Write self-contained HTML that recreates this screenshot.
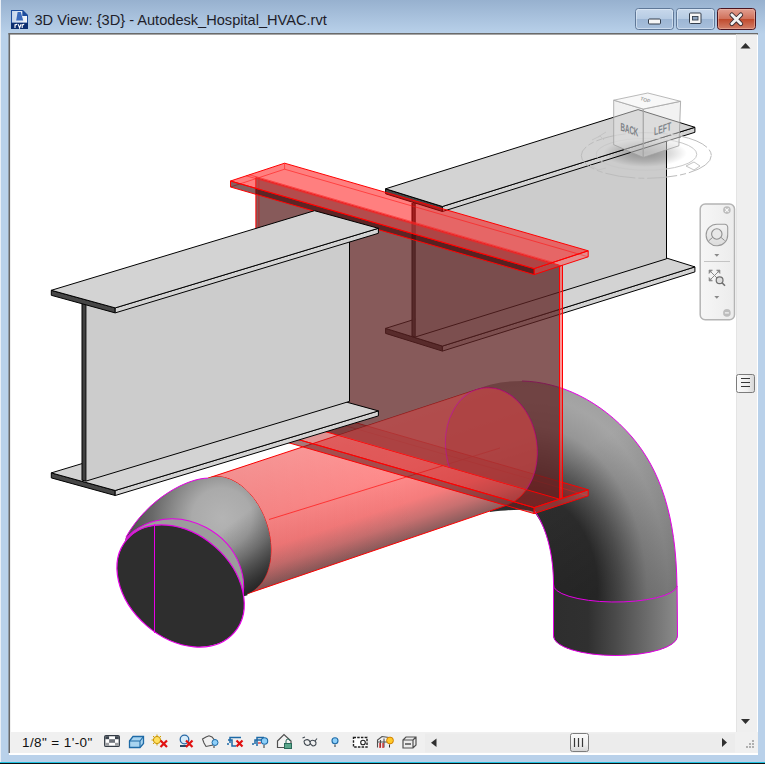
<!DOCTYPE html>
<html><head><meta charset="utf-8"><style>html,body{margin:0;padding:0;background:#fff;}svg{display:block}</style></head>
<body><svg width="765" height="764" viewBox="0 0 765 764">

<defs>
<linearGradient id="gTitle" x1="0" y1="0" x2="0" y2="1">
<stop offset="0" stop-color="#97b1cf"/><stop offset="1" stop-color="#b9d1ea"/></linearGradient>
<linearGradient id="gBtn" x1="0" y1="0" x2="0" y2="1">
<stop offset="0" stop-color="#c9d9ec"/><stop offset="0.5" stop-color="#b6cbe3"/><stop offset="0.51" stop-color="#9db6d4"/><stop offset="1" stop-color="#a8c0dc"/></linearGradient>
<linearGradient id="gClose" x1="0" y1="0" x2="0" y2="1">
<stop offset="0" stop-color="#e3a193"/><stop offset="0.5" stop-color="#d0705a"/><stop offset="0.51" stop-color="#c04a2d"/><stop offset="1" stop-color="#d3826c"/></linearGradient>
<linearGradient id="gPipe" gradientUnits="userSpaceOnUse" x1="208.25" y1="478.1" x2="246.75" y2="593.9"><stop offset="0" stop-color="#ff9c9c"/><stop offset="0.45" stop-color="#ff8c8c"/><stop offset="0.7" stop-color="#f57c7c"/><stop offset="0.85" stop-color="#c87070"/><stop offset="1" stop-color="#845a5a"/></linearGradient><linearGradient id="gPipe2" gradientUnits="userSpaceOnUse" x1="260" y1="580" x2="420" y2="520"><stop offset="0" stop-color="#600000" stop-opacity="0.08"/><stop offset="1" stop-color="#600000" stop-opacity="0"/></linearGradient>
<radialGradient id="gElbowL" gradientUnits="userSpaceOnUse" cx="222" cy="518" r="100"><stop offset="0" stop-color="#b4b4b4"/><stop offset="0.3" stop-color="#aaaaaa"/><stop offset="0.7" stop-color="#686868"/><stop offset="1" stop-color="#484848"/></radialGradient>
<linearGradient id="gElbowL2" gradientUnits="userSpaceOnUse" x1="215" y1="535" x2="255" y2="590"><stop offset="0" stop-color="#000" stop-opacity="0"/><stop offset="0.5" stop-color="#000" stop-opacity="0.25"/><stop offset="1" stop-color="#000" stop-opacity="0.6"/></linearGradient>
<radialGradient id="gElbowR" gradientUnits="userSpaceOnUse" cx="0" cy="0" r="1" gradientTransform="translate(530 590) scale(150 210)"><stop offset="0" stop-color="#2d2d2d"/><stop offset="0.45" stop-color="#2f2f2f"/><stop offset="0.6" stop-color="#5a5a5a"/><stop offset="0.78" stop-color="#969696"/><stop offset="0.92" stop-color="#a5a5a5"/><stop offset="1" stop-color="#a0a0a0"/></radialGradient>
<linearGradient id="gElbowR2" gradientUnits="userSpaceOnUse" x1="600" y1="440" x2="690" y2="580"><stop offset="0" stop-color="#000" stop-opacity="0"/><stop offset="1" stop-color="#000" stop-opacity="0.28"/></linearGradient>
<linearGradient id="gVert" gradientUnits="userSpaceOnUse" x1="553" y1="0" x2="678" y2="0"><stop offset="0" stop-color="#2e2e2e"/><stop offset="0.28" stop-color="#303030"/><stop offset="0.5" stop-color="#4a4a4a"/><stop offset="1" stop-color="#8c8c8c"/></linearGradient>
</defs>
<rect x="0" y="0" width="765" height="764" fill="#b9d1ea"/>
<rect x="0" y="0" width="765" height="34" fill="url(#gTitle)"/>
<rect x="0" y="0" width="1" height="764" fill="#e8eef6"/>
<!-- title icon -->
<path d="M11,10 H23 L28,15 V29 H11 Z" fill="#1c4c9c"/>
<defs><linearGradient id="gIco" x1="0" y1="0" x2="1" y2="0"><stop offset="0" stop-color="#c4d4ea"/><stop offset="1" stop-color="#f4f8fc"/></linearGradient></defs>
<path d="M12,11 H22.3 V16 H27 V22.8 H12 Z" fill="url(#gIco)"/>
<path d="M16.2,20.5 L17.6,12 L20.8,12 L23.2,20.5 Z" fill="#3a6abc"/>
<rect x="11" y="22.8" width="17" height="6.2" fill="#0c2e70"/>
<path d="M15,24.3 V28 M15,25.5 Q15.8,24.3 17.2,24.4 M18.2,24.3 L19.6,28 L21,24.3 M22.2,24.3 V28 M22.2,25.5 Q23,24.3 24.2,24.4" fill="none" stroke="#ffffff" stroke-width="1.1"/>
<text x="34.5" y="25" font-family="Liberation Sans" font-size="14.6" fill="#1e1e2a">3D View: {3D} - Autodesk_Hospital_HVAC.rvt</text>
<!-- buttons -->
<rect x="635.5" y="8.5" width="38" height="21" rx="3" fill="url(#gBtn)" stroke="#5f7898" stroke-width="1"/>
<rect x="636.5" y="9.5" width="36" height="19" rx="2" fill="none" stroke="#e4eef8" stroke-opacity="0.6" stroke-width="1"/>
<rect x="676.5" y="8.5" width="38" height="21" rx="3" fill="url(#gBtn)" stroke="#5f7898" stroke-width="1"/>
<rect x="677.5" y="9.5" width="36" height="19" rx="2" fill="none" stroke="#e4eef8" stroke-opacity="0.6" stroke-width="1"/>
<rect x="717.5" y="8.5" width="38" height="21" rx="3" fill="url(#gClose)" stroke="#4a1420" stroke-width="1"/>
<rect x="718.5" y="9.5" width="36" height="19" rx="2" fill="none" stroke="#f0c0b0" stroke-opacity="0.5" stroke-width="1"/>
<rect x="648.5" y="19" width="12" height="5" rx="1" fill="#f6f6f6" stroke="#343e4c" stroke-width="1"/>
<rect x="689.5" y="13" width="11.5" height="10.5" rx="1" fill="#f6f6f6" stroke="#343e4c" stroke-width="1"/>
<rect x="692.5" y="16.5" width="5.5" height="3.5" fill="#8ea4c0" stroke="#343e4c" stroke-width="0.9"/>
<path d="M731.8,14.8 L740.8,23.8 M740.8,14.8 L731.8,23.8" stroke="#3a2a30" stroke-width="4.6" stroke-linecap="round"/>
<path d="M731.8,14.8 L740.8,23.8 M740.8,14.8 L731.8,23.8" stroke="#f2f2f2" stroke-width="2.8" stroke-linecap="round"/>
<!-- client -->
<rect x="9" y="33" width="749" height="722" fill="#ffffff"/>
<rect x="8.5" y="33" width="1.6" height="720" fill="#6a6a6a"/>
<rect x="8.5" y="33" width="749.5" height="1.6" fill="#6a6a6a"/>

<svg x="10" y="34.5" width="726" height="697.5" viewBox="10 34.5 726 697.5" overflow="hidden">
<polygon points="385.6,328.4 442.4,346.1 442.4,351.1 385.6,333.4" fill="#464646" stroke="#000" stroke-width="1"/>
<polygon points="442.4,346.1 694.9,266.9 694.9,271.9 442.4,351.1" fill="#d3d3d3" stroke="#000" stroke-width="1"/>
<polygon points="385.6,328.4 442.4,346.1 694.9,266.9 638.1,249.2" fill="#d3d3d3" stroke="#000" stroke-width="1"/>
<polygon points="412.0,203.0 415.3,203.0 415.3,337.0 412.0,336.0" fill="#404040"/>
<line x1="412.0" y1="203.0" x2="412.0" y2="336.0" stroke="#000" stroke-width="1"/>
<polygon points="415.3,203.0 666.5,125.0 666.5,258.8 415.3,337.0" fill="#cccccc"/>
<polyline points="666.5,125.0 666.5,258.8 415.3,337.0 412.0,336.0" fill="none" stroke="#000" stroke-width="1"/>
<line x1="415.3" y1="203.0" x2="415.3" y2="337.0" stroke="#000" stroke-width="0.8"/>
<polygon points="385.6,188.8 442.4,206.5 442.4,211.5 385.6,193.8" fill="#464646" stroke="#000" stroke-width="1"/>
<polygon points="442.4,206.5 694.9,127.3 694.9,132.3 442.4,211.5" fill="#d3d3d3" stroke="#000" stroke-width="1"/>
<polygon points="385.6,188.8 442.4,206.5 694.9,127.3 638.1,109.6" fill="#d3d3d3" stroke="#000" stroke-width="1"/>
<path d="M470,392 C490,383 505,381 522,381 C560,382 600,400 632,437 C660,470 676,515 677,586 L677.5,636 A62,19.5 0 0 1 553.5,636 L553.5,582 C553,550 545,525 534,512 C525,508 510,510 490,512 Z" fill="url(#gElbowR)"/><path d="M470,392 C490,383 505,381 522,381 C560,382 600,400 632,437 C660,470 676,515 677,586 L677.5,636 A62,19.5 0 0 1 553.5,636 L553.5,582 C553,550 545,525 534,512 C525,508 510,510 490,512 Z" fill="url(#gElbowR2)"/>
<path d="M553.5,584 A62,17 0 0 0 677.3,586 L677.5,636 A62,19.5 0 0 1 553.5,636 Z" fill="url(#gVert)"/>
<path d="M522,381 C560,382 600,400 632,437 C660,470 676,515 677,586 L677.5,636 A62,19.5 0 0 1 553.5,636 L553.5,582 C553,550 545,525 534,510" fill="none" stroke="#e600e6" stroke-width="1"/><path d="M553.5,584 A62,17 0 0 0 677.3,586" fill="none" stroke="#e600e6" stroke-width="1"/>
<polygon points="208.2,478.1 210.8,477.4 213.5,476.9 216.2,476.7 219.0,476.7 221.8,477.0 224.6,477.6 227.4,478.4 230.3,479.4 233.1,480.7 235.9,482.2 238.7,483.9 241.4,485.9 244.1,488.1 246.6,490.5 249.2,493.1 251.6,495.9 253.9,498.8 256.1,501.9 258.2,505.1 260.1,508.5 261.9,512.0 263.6,515.6 265.1,519.3 266.4,523.1 267.6,526.9 268.6,530.7 269.4,534.6 270.1,538.5 270.5,542.4 270.8,546.2 270.9,550.0 270.8,553.7 270.5,557.4 270.1,561.0 269.4,564.4 268.6,567.8 267.6,571.0 266.5,574.0 265.1,576.9 263.6,579.7 262.0,582.2 260.2,584.5 258.2,586.6 256.2,588.6 254.0,590.2 251.7,591.7 249.3,592.9 246.8,593.9 506.0,505.5 508.2,504.6 510.4,503.6 512.6,502.5 514.7,501.2 516.7,499.7 518.7,498.1 520.6,496.4 522.4,494.5 524.1,492.5 525.8,490.4 527.3,488.2 528.8,485.8 530.1,483.4 531.4,480.8 532.5,478.2 533.5,475.5 534.4,472.7 535.2,469.8 535.9,466.9 536.4,463.9 536.8,460.8 537.1,457.8 537.3,454.7 537.3,451.6 537.2,448.4 537.0,445.3 536.7,442.2 536.2,439.1 535.7,436.0 535.0,432.9 534.1,429.9 533.2,427.0 532.1,424.1 531.0,421.2 529.7,418.4 528.3,415.7 526.8,413.1 525.3,410.6 523.6,408.2 521.8,405.9 520.0,403.7 518.1,401.7 516.1,399.7 514.0,397.9 511.9,396.2 509.7,394.7 507.5,393.3 505.2,392.1 502.9,391.0 500.6,390.0 498.2,389.3 495.8,388.6 493.4,388.2 491.0,387.9 488.6,387.8 486.2,387.8 483.8,388.0 481.5,388.3 479.1,388.9 476.8,389.5" fill="url(#gPipe)" stroke="#ff0000" stroke-width="1"/><polygon points="208.2,478.1 210.8,477.4 213.5,476.9 216.2,476.7 219.0,476.7 221.8,477.0 224.6,477.6 227.4,478.4 230.3,479.4 233.1,480.7 235.9,482.2 238.7,483.9 241.4,485.9 244.1,488.1 246.6,490.5 249.2,493.1 251.6,495.9 253.9,498.8 256.1,501.9 258.2,505.1 260.1,508.5 261.9,512.0 263.6,515.6 265.1,519.3 266.4,523.1 267.6,526.9 268.6,530.7 269.4,534.6 270.1,538.5 270.5,542.4 270.8,546.2 270.9,550.0 270.8,553.7 270.5,557.4 270.1,561.0 269.4,564.4 268.6,567.8 267.6,571.0 266.5,574.0 265.1,576.9 263.6,579.7 262.0,582.2 260.2,584.5 258.2,586.6 256.2,588.6 254.0,590.2 251.7,591.7 249.3,592.9 246.8,593.9 506.0,505.5 508.2,504.6 510.4,503.6 512.6,502.5 514.7,501.2 516.7,499.7 518.7,498.1 520.6,496.4 522.4,494.5 524.1,492.5 525.8,490.4 527.3,488.2 528.8,485.8 530.1,483.4 531.4,480.8 532.5,478.2 533.5,475.5 534.4,472.7 535.2,469.8 535.9,466.9 536.4,463.9 536.8,460.8 537.1,457.8 537.3,454.7 537.3,451.6 537.2,448.4 537.0,445.3 536.7,442.2 536.2,439.1 535.7,436.0 535.0,432.9 534.1,429.9 533.2,427.0 532.1,424.1 531.0,421.2 529.7,418.4 528.3,415.7 526.8,413.1 525.3,410.6 523.6,408.2 521.8,405.9 520.0,403.7 518.1,401.7 516.1,399.7 514.0,397.9 511.9,396.2 509.7,394.7 507.5,393.3 505.2,392.1 502.9,391.0 500.6,390.0 498.2,389.3 495.8,388.6 493.4,388.2 491.0,387.9 488.6,387.8 486.2,387.8 483.8,388.0 481.5,388.3 479.1,388.9 476.8,389.5" fill="url(#gPipe2)"/>
<line x1="269" y1="519.5" x2="500" y2="448" stroke="#ff2020" stroke-width="0.8"/>

<polyline points="230.5,426.0 284.6,408.2 588.2,495.8" fill="none" stroke="#ff2020" stroke-width="0.8" stroke-opacity="0.7"/>
<line x1="284.6" y1="402.2" x2="284.6" y2="408.2" stroke="#ff2020" stroke-width="0.8" stroke-opacity="0.7"/>
<polygon points="534.1,507.6 588.2,489.8 588.2,495.8 534.1,513.6" fill="#ff4040" fill-opacity="0.45" stroke="#ff0000" stroke-width="1"/>
<polygon points="230.5,420.0 534.1,507.6 534.1,513.6 230.5,426.0" fill="#6a2020" fill-opacity="0.6" stroke="#ff0000" stroke-width="1"/>
<polygon points="230.5,420.0 284.6,402.2 588.2,489.8 534.1,507.6" fill="#c01c1c" fill-opacity="0.48" stroke="#ff0000" stroke-width="1"/>
<polygon points="255.9,177.6 559.5,265.2 559.5,499.2 255.9,411.6" fill="#5f2323" fill-opacity="0.75" stroke="#ff0000" stroke-width="1"/>
<polygon points="559.5,266.2 562.5,265.2 562.5,498.2 559.5,499.2" fill="#ff3030" fill-opacity="0.5" stroke="#ff0000" stroke-width="1"/>
<line x1="258.9" y1="178.6" x2="258.9" y2="411.6" stroke="#c02020" stroke-width="1" stroke-opacity="0.8"/>
<clipPath id="cWeb"><polygon points="255.9,177.6 559.5,265.2 559.5,499.2 255.9,411.6"/></clipPath><g clip-path="url(#cWeb)"><polygon points="208.2,478.1 210.8,477.4 213.5,476.9 216.2,476.7 219.0,476.7 221.8,477.0 224.6,477.6 227.4,478.4 230.3,479.4 233.1,480.7 235.9,482.2 238.7,483.9 241.4,485.9 244.1,488.1 246.6,490.5 249.2,493.1 251.6,495.9 253.9,498.8 256.1,501.9 258.2,505.1 260.1,508.5 261.9,512.0 263.6,515.6 265.1,519.3 266.4,523.1 267.6,526.9 268.6,530.7 269.4,534.6 270.1,538.5 270.5,542.4 270.8,546.2 270.9,550.0 270.8,553.7 270.5,557.4 270.1,561.0 269.4,564.4 268.6,567.8 267.6,571.0 266.5,574.0 265.1,576.9 263.6,579.7 262.0,582.2 260.2,584.5 258.2,586.6 256.2,588.6 254.0,590.2 251.7,591.7 249.3,592.9 246.8,593.9 506.0,505.5 508.2,504.6 510.4,503.6 512.6,502.5 514.7,501.2 516.7,499.7 518.7,498.1 520.6,496.4 522.4,494.5 524.1,492.5 525.8,490.4 527.3,488.2 528.8,485.8 530.1,483.4 531.4,480.8 532.5,478.2 533.5,475.5 534.4,472.7 535.2,469.8 535.9,466.9 536.4,463.9 536.8,460.8 537.1,457.8 537.3,454.7 537.3,451.6 537.2,448.4 537.0,445.3 536.7,442.2 536.2,439.1 535.7,436.0 535.0,432.9 534.1,429.9 533.2,427.0 532.1,424.1 531.0,421.2 529.7,418.4 528.3,415.7 526.8,413.1 525.3,410.6 523.6,408.2 521.8,405.9 520.0,403.7 518.1,401.7 516.1,399.7 514.0,397.9 511.9,396.2 509.7,394.7 507.5,393.3 505.2,392.1 502.9,391.0 500.6,390.0 498.2,389.3 495.8,388.6 493.4,388.2 491.0,387.9 488.6,387.8 486.2,387.8 483.8,388.0 481.5,388.3 479.1,388.9 476.8,389.5" fill="#ff6464" fill-opacity="0.35"/><ellipse cx="491.4" cy="447.5" rx="45.6" ry="60" transform="rotate(-8 491.4 447.5)" fill="#a01010" fill-opacity="0.12" stroke="#c000c0" stroke-width="1" stroke-opacity="0.5"/></g>
<polyline points="230.5,187.0 284.6,169.2 588.2,256.8" fill="none" stroke="#ff2020" stroke-width="0.8" stroke-opacity="0.7"/>
<line x1="284.6" y1="163.2" x2="284.6" y2="169.2" stroke="#ff2020" stroke-width="0.8" stroke-opacity="0.7"/>
<polygon points="534.1,268.6 588.2,250.8 588.2,256.8 534.1,274.6" fill="#ff4040" fill-opacity="0.45" stroke="#ff0000" stroke-width="1"/>
<polygon points="230.5,181.0 534.1,268.6 534.1,274.6 230.5,187.0" fill="#470909" fill-opacity="0.65" stroke="#ff0000" stroke-width="1"/>
<polygon points="249.4,174.8 284.6,163.2 588.2,250.8 553.0,262.4" fill="#ff0000" fill-opacity="0.5"/>
<polygon points="230.5,181.0 249.4,174.8 255.9,176.6 255.9,188.3" fill="#ff0000" fill-opacity="0.5"/>
<polygon points="255.9,188.3 255.9,176.6 553.0,262.4 534.1,268.6" fill="#e13e3e" fill-opacity="0.5"/>
<line x1="246.2" y1="175.8" x2="549.8" y2="263.4" stroke="#ff2020" stroke-width="0.8" stroke-opacity="0.8"/>
<line x1="249.4" y1="174.8" x2="553.0" y2="262.4" stroke="#ff2020" stroke-width="0.8" stroke-opacity="0.8"/>
<polygon points="230.5,181.0 284.6,163.2 588.2,250.8 534.1,268.6" fill="none" stroke="#ff0000" stroke-width="1"/>
<polygon points="51.3,472.9 115.2,490.5 115.2,495.5 51.3,477.9" fill="#464646" stroke="#000" stroke-width="1"/>
<polygon points="115.2,490.5 378.4,410.9 378.4,415.9 115.2,495.5" fill="#d3d3d3" stroke="#000" stroke-width="1"/>
<polygon points="51.3,472.9 115.2,490.5 378.4,410.9 314.5,393.3" fill="#d3d3d3" stroke="#000" stroke-width="1"/>
<polygon points="82.0,300.0 86.0,300.0 86.0,481.1 82.0,480.1" fill="#404040"/>
<line x1="82.0" y1="300.0" x2="82.0" y2="480.1" stroke="#000" stroke-width="1"/>
<polygon points="86.0,300.0 349.5,230.0 349.5,401.4 86.0,481.1" fill="#cccccc"/>
<polyline points="349.5,230.0 349.5,401.4 86.0,481.1 82.0,480.1" fill="none" stroke="#000" stroke-width="1"/>
<line x1="86.0" y1="300.0" x2="86.0" y2="481.1" stroke="#000" stroke-width="0.8"/>
<polygon points="51.3,290.3 115.2,307.9 115.2,312.9 51.3,295.3" fill="#464646" stroke="#000" stroke-width="1"/>
<polygon points="115.2,307.9 378.4,228.3 378.4,233.3 115.2,312.9" fill="#d3d3d3" stroke="#000" stroke-width="1"/>
<polygon points="51.3,290.3 115.2,307.9 378.4,228.3 314.5,210.7" fill="#d3d3d3" stroke="#000" stroke-width="1"/>
<clipPath id="cElbowL"><path d="M208.2,478.1 C188,478 148,498 126,537 L118,567 L150,625 L247.8,594.9 L246.8,593.9 L249.3,592.9 L251.7,591.7 L254.0,590.2 L256.2,588.6 L258.2,586.6 L260.2,584.5 L262.0,582.2 L263.6,579.7 L265.1,576.9 L266.5,574.0 L267.6,571.0 L268.6,567.8 L269.4,564.4 L270.1,561.0 L270.5,557.4 L270.8,553.7 L270.9,550.0 L270.8,546.2 L270.5,542.4 L270.1,538.5 L269.4,534.6 L268.6,530.7 L267.6,526.9 L266.4,523.1 L265.1,519.3 L263.6,515.6 L261.9,512.0 L260.1,508.5 L258.2,505.1 L256.1,501.9 L253.9,498.8 L251.6,495.9 L249.2,493.1 L246.6,490.5 L244.1,488.1 L241.4,485.9 L238.7,483.9 L235.9,482.2 L233.1,480.7 L230.3,479.4 L227.4,478.4 L224.6,477.6 L221.8,477.0 L219.0,476.7 L216.2,476.7 L213.5,476.9 L210.8,477.4 L208.2,478.1 Z"/></clipPath><path d="M208.2,478.1 C188,478 148,498 126,537 L118,567 L150,625 L247.8,594.9 L246.8,593.9 L249.3,592.9 L251.7,591.7 L254.0,590.2 L256.2,588.6 L258.2,586.6 L260.2,584.5 L262.0,582.2 L263.6,579.7 L265.1,576.9 L266.5,574.0 L267.6,571.0 L268.6,567.8 L269.4,564.4 L270.1,561.0 L270.5,557.4 L270.8,553.7 L270.9,550.0 L270.8,546.2 L270.5,542.4 L270.1,538.5 L269.4,534.6 L268.6,530.7 L267.6,526.9 L266.4,523.1 L265.1,519.3 L263.6,515.6 L261.9,512.0 L260.1,508.5 L258.2,505.1 L256.1,501.9 L253.9,498.8 L251.6,495.9 L249.2,493.1 L246.6,490.5 L244.1,488.1 L241.4,485.9 L238.7,483.9 L235.9,482.2 L233.1,480.7 L230.3,479.4 L227.4,478.4 L224.6,477.6 L221.8,477.0 L219.0,476.7 L216.2,476.7 L213.5,476.9 L210.8,477.4 L208.2,478.1 Z" fill="url(#gElbowL)"/><path d="M208.2,478.1 C188,478 148,498 126,537 L118,567 L150,625 L247.8,594.9 L246.8,593.9 L249.3,592.9 L251.7,591.7 L254.0,590.2 L256.2,588.6 L258.2,586.6 L260.2,584.5 L262.0,582.2 L263.6,579.7 L265.1,576.9 L266.5,574.0 L267.6,571.0 L268.6,567.8 L269.4,564.4 L270.1,561.0 L270.5,557.4 L270.8,553.7 L270.9,550.0 L270.8,546.2 L270.5,542.4 L270.1,538.5 L269.4,534.6 L268.6,530.7 L267.6,526.9 L266.4,523.1 L265.1,519.3 L263.6,515.6 L261.9,512.0 L260.1,508.5 L258.2,505.1 L256.1,501.9 L253.9,498.8 L251.6,495.9 L249.2,493.1 L246.6,490.5 L244.1,488.1 L241.4,485.9 L238.7,483.9 L235.9,482.2 L233.1,480.7 L230.3,479.4 L227.4,478.4 L224.6,477.6 L221.8,477.0 L219.0,476.7 L216.2,476.7 L213.5,476.9 L210.8,477.4 L208.2,478.1 Z" fill="url(#gElbowL2)"/>
<g clip-path="url(#cElbowL)"><ellipse cx="178" cy="580.5" rx="67" ry="60" transform="rotate(28 178 580.5)" fill="#9c9c9c" stroke="#e600e6" stroke-width="1"/></g>
<ellipse cx="180.6" cy="586" rx="71" ry="52.2" transform="rotate(41 180.6 586)" fill="#2e2e2e" stroke="#e600e6" stroke-width="1.2"/>
<line x1="154.5" y1="524" x2="154.5" y2="633" stroke="#e600e6" stroke-width="1"/>
<path d="M208.2,478.1 C188,478 148,498 126,537" fill="none" stroke="#e600e6" stroke-width="1"/>

<defs><radialGradient id="gShadow" cx="0.5" cy="0.5" r="0.5"><stop offset="0" stop-color="#000" stop-opacity="0.3"/><stop offset="0.6" stop-color="#000" stop-opacity="0.14"/><stop offset="1" stop-color="#000" stop-opacity="0"/></radialGradient></defs>
<ellipse cx="646.3" cy="155.5" rx="65" ry="22.8" fill="none" stroke="#bcbcbc" stroke-width="1" stroke-dasharray="30,3,6,3"/>
<ellipse cx="646.5" cy="154.3" rx="50.3" ry="16" fill="none" stroke="#c8c8c8" stroke-width="1"/>
<path d="M592,140 L600,136 L604,140 M590,165 L598,170 L606,168 M686,166 L694,162 L700,166 L694,170 Z M598,137 L606,132" fill="none" stroke="#c4c4c4" stroke-width="1"/>
<ellipse cx="645" cy="153" rx="42" ry="14" fill="url(#gShadow)"/>
<polygon points="613.7,100.2 643.3,109.1 643.3,157.4 613.7,144.7" fill="#e2e2e2" fill-opacity="0.5" stroke="#a0a0a0" stroke-width="0.8"/>
<polygon points="643.3,109.1 680.6,101.3 678.9,145.8 643.3,157.4" fill="#e6e6e6" fill-opacity="0.5" stroke="#a0a0a0" stroke-width="0.8"/>
<polygon points="613.7,100.2 647.8,93 680.6,101.3 643.3,109.1" fill="#f4f4f4" fill-opacity="0.65" stroke="#a8a8a8" stroke-width="0.8"/>
<text x="0" y="0" font-family="Liberation Sans" font-weight="bold" font-size="11" fill="#7c8186" transform="translate(620.5,130.5) skewY(19) scale(0.56,1.05)">BACK</text>
<text x="0" y="0" font-family="Liberation Sans" font-weight="bold" font-size="11.5" fill="#82878c" transform="translate(654,135.5) skewY(-18) scale(0.6,1)">LEFT</text>
<text x="0" y="0" font-family="Liberation Sans" font-weight="bold" font-size="5" fill="#a0a0a0" transform="translate(640,100) rotate(18)">TOP</text>


<defs><linearGradient id="gNav" x1="0" y1="0" x2="1" y2="0"><stop offset="0" stop-color="#f6f6f6"/><stop offset="1" stop-color="#ececec"/></linearGradient>
<linearGradient id="gWheel" x1="0" y1="0" x2="0" y2="1"><stop offset="0" stop-color="#f2f2f2"/><stop offset="1" stop-color="#dcdcdc"/></linearGradient></defs>
<rect x="700.2" y="204" width="34.3" height="115.8" rx="5" fill="url(#gNav)" stroke="#b4b4b4" stroke-width="1.5"/>
<circle cx="726.9" cy="210.1" r="3.8" fill="#bdbdbd"/>
<path d="M725.2,208.4 L728.6,211.8 M728.6,208.4 L725.2,211.8" stroke="#fafafa" stroke-width="1.1"/>
<path d="M727.7,234.5 A10.8,10.8 0 1 1 716.9,224.2 L724.7,224.2 A3,3 0 0 1 727.7,227.2 Z" fill="url(#gWheel)" stroke="#9a9a9a" stroke-width="1.1"/>
<circle cx="716.8" cy="234" r="5.2" fill="#e8e8e8" stroke="#8e8e8e" stroke-width="1.1"/>
<path d="M709,240.5 L712.5,237.5 M724.6,240.5 L721.1,237.5" stroke="#8e8e8e" stroke-width="1"/>
<path d="M714.3,254 L719.3,254 L716.8,256.8 Z" fill="#8a8a8a"/>
<line x1="704" y1="261.5" x2="730" y2="261.5" stroke="#c4c4c4" stroke-width="1"/>
<path d="M709.5,270.5 L719.5,280.5 M719.5,270.5 L709.5,280.5" stroke="#8a8a8a" stroke-width="1"/>
<path d="M709,270 L712.5,270 L709,273.5 Z M720,270 L716.5,270 L720,273.5 Z M709,281 L709,277.5 L712.5,281 Z" fill="#8a8a8a" stroke="#8a8a8a" stroke-width="0.6"/>
<circle cx="719.6" cy="280.3" r="3.4" fill="#dedede" stroke="#6e6e6e" stroke-width="1.2"/>
<line x1="722" y1="282.8" x2="725" y2="285.8" stroke="#6e6e6e" stroke-width="1.6"/>
<path d="M714.3,296 L719.3,296 L716.8,298.8 Z" fill="#8a8a8a"/>
<circle cx="726.9" cy="312.9" r="3.8" fill="#bdbdbd"/>
<line x1="724.9" y1="312.9" x2="728.9" y2="312.9" stroke="#fafafa" stroke-width="1.1"/>

</svg>

<!-- vertical scrollbar -->
<rect x="736" y="34.5" width="21" height="698" fill="#efefef"/>
<rect x="736" y="34.5" width="1" height="698" fill="#e4e4e4"/>
<path d="M740.5,48.5 L750.5,48.5 L745.5,43 Z" fill="#303030"/>
<path d="M741,719 L750,719 L745.5,724 Z" fill="#303030"/>
<defs><linearGradient id="gThumb" x1="0" y1="0" x2="1" y2="0"><stop offset="0" stop-color="#fafafa"/><stop offset="0.6" stop-color="#f0f0f0"/><stop offset="1" stop-color="#d4d4d4"/></linearGradient><linearGradient id="gThumbH" x1="0" y1="0" x2="0" y2="1"><stop offset="0" stop-color="#fafafa"/><stop offset="0.6" stop-color="#f0f0f0"/><stop offset="1" stop-color="#d4d4d4"/></linearGradient></defs><rect x="736.5" y="374.5" width="18" height="18" rx="2" fill="url(#gThumb)" stroke="#7c7c7c" stroke-width="1"/>
<path d="M741,378.5 H750 M741,382.5 H750 M741,386.5 H750" stroke="#383838" stroke-width="1.2"/>
<!-- status bar -->
<rect x="10" y="732" width="748" height="21" fill="#f0f0f0"/>
<rect x="10" y="753" width="748" height="2" fill="#ffffff"/>
<text x="22" y="746.5" font-family="Liberation Sans" font-size="13.5" letter-spacing="0.4" fill="#101010">1/8" = 1'-0"</text>
<!-- icons -->
<g stroke-width="1" fill="none">
<rect x="104.7" y="735.6" width="14.6" height="10.8" rx="1.2" fill="#fff" stroke="#343c46" stroke-width="1.3"/>
<rect x="105.3" y="736.2" width="3.8" height="3" fill="#3c444e"/><rect x="115" y="736.2" width="3.8" height="3" fill="#3c444e"/>
<rect x="109.1" y="739.2" width="5.9" height="3.6" fill="#6e737a"/>
<rect x="105.3" y="742.8" width="3.8" height="3" fill="#9a9ca0"/><rect x="115" y="742.8" width="3.8" height="3" fill="#9a9ca0"/>
<path d="M129.5,741 L133,736.5 L143.5,736.5 L143.5,743.5 L140,747.5 L129.5,747.5 Z" fill="#a8d4f0" stroke="#1e6aa6" stroke-width="1.3"/>
<path d="M129.5,741 L140,741 L143.5,736.5 M140,741 L140,747.5" stroke="#1e6aa6" stroke-width="1.1"/>
<circle cx="157" cy="740" r="3.6" fill="#ffe060" stroke="#c89000"/>
<path d="M157,734.5 V736 M151.5,740 H153 M153,736 L154.2,737.2 M161,736 L159.8,737.2 M153,744 L154.2,742.8 M157,744 V745.5" stroke="#d0a000"/>
<path d="M160.5,740.5 L167,747 M167,740.5 L160.5,747" stroke="#e01010" stroke-width="2.2"/>
<circle cx="184.5" cy="739.5" r="4.3" fill="#d8ecfa" stroke="#2a6aa6" stroke-width="1.3"/>
<path d="M180,746 H187" stroke="#2a4a6a" stroke-width="2"/>
<path d="M186,740.5 L192.5,747 M192.5,740.5 L186,747" stroke="#e01010" stroke-width="2.2"/>
<path d="M202.5,739 L206,737 L209,735.8 L212,737 L214,739.5 L213,745 L206,746.5 L204,743 Z" fill="#f0f0f0" stroke="#505050" stroke-width="1.1"/>
<circle cx="215" cy="742.5" r="3" fill="#8ed0fa" stroke="#1e6aa6"/>
<path d="M214,746 V748" stroke="#303030"/>
<path d="M228,740 H232 V746 H236 M230,743 V737.5 H241 M227,744 H229" stroke="#1e6aa6" stroke-width="1.5"/>
<path d="M236.5,740.5 L242.5,746.5 M242.5,740.5 L236.5,746.5" stroke="#e01010" stroke-width="2.2"/>
<path d="M252,744 H254 M255,744 V740 H262 M257,746 V737.5 H264" stroke="#1e6aa6" stroke-width="1.5"/>
<path d="M258,743 H261" stroke="#e02020" stroke-width="1.2"/>
<circle cx="264.5" cy="741" r="3.2" fill="#8ed0fa" stroke="#1e6aa6" stroke-width="1.1"/>
<path d="M264,745 V748" stroke="#303030"/>
<path d="M277.5,741 L284,734.5 L291,741 V747.5 H277.5 Z" fill="#f2f2f2" stroke="#505050" stroke-width="1.2"/>
<rect x="284.5" y="743.5" width="7" height="5" fill="#5aa68a" stroke="#2a6a5a"/>
<path d="M286,743 V741 A2,2 0 0 1 290,741" stroke="#2a6a5a"/>
<path d="M302.5,738 L305,737 M304,741 C306,739 309,739 310,742 C311,745 308,746 306,745 C304,744 304,742 304,741 M310,742 C311,740 313,740 315,741 C317,743 316,746 313,746 C311,745 310,743 310,742 M315,741 L317,738.5" stroke="#404850" stroke-width="1.1"/>
<circle cx="335" cy="740.8" r="3" fill="#8ed0fa" stroke="#1e6aa6" stroke-width="1.1"/>
<path d="M335,744.5 V747" stroke="#303030"/>
<rect x="353.5" y="737.5" width="13.5" height="9.5" fill="#fff" stroke="#202020" stroke-width="1.4" stroke-dasharray="2.5,1.2"/>
<circle cx="363" cy="742.5" r="2.3" fill="#fff" stroke="#202020" stroke-width="1.1"/>
<path d="M377.5,747.5 V740 L382,736.5 L389,737.5 M380.5,740 V747.5 M384,738.5 V747.5 M377.5,742 H388" stroke="#505050" stroke-width="1.1"/>
<path d="M380,743 V748 M383,743 V748" stroke="#d02020" stroke-width="1.3"/>
<circle cx="390" cy="740.5" r="3.4" fill="#ffc828" stroke="#d08000"/>
<path d="M389.5,744.5 V747.5" stroke="#303030"/>
<path d="M403,740 L406,737 H416 V745 L413,748 H403 Z M403,740 H413 V748 M413,740 L416,737" fill="#ececec" stroke="#505050" stroke-width="1.2"/>
<path d="M405,744 H411" stroke="#505050" stroke-width="1.5"/>
</g>
<!-- h scrollbar -->
<rect x="425" y="733.5" width="310" height="19" fill="#ececec"/>
<path d="M436.5,738.5 L436.5,747 L431,742.8 Z" fill="#303030"/>
<path d="M722,738 L722,747 L727,742.5 Z" fill="#303030"/>
<rect x="570.5" y="733.5" width="18" height="18" rx="2" fill="url(#gThumbH)" stroke="#7c7c7c" stroke-width="1"/>
<path d="M574.5,738 V747 M578.5,738 V747 M582.5,738 V747" stroke="#383838" stroke-width="1.2"/>
<!-- grip -->
<g fill="#b0b0b0"><rect x="752" y="740" width="2" height="2"/><rect x="749" y="743" width="2" height="2"/><rect x="752" y="743" width="2" height="2"/><rect x="746" y="746" width="2" height="2"/><rect x="749" y="746" width="2" height="2"/><rect x="752" y="746" width="2" height="2"/></g>
<rect x="0" y="762" width="765" height="1" fill="#20c0e0"/>
<rect x="0" y="763" width="765" height="1" fill="#101010"/>

</svg></body></html>
